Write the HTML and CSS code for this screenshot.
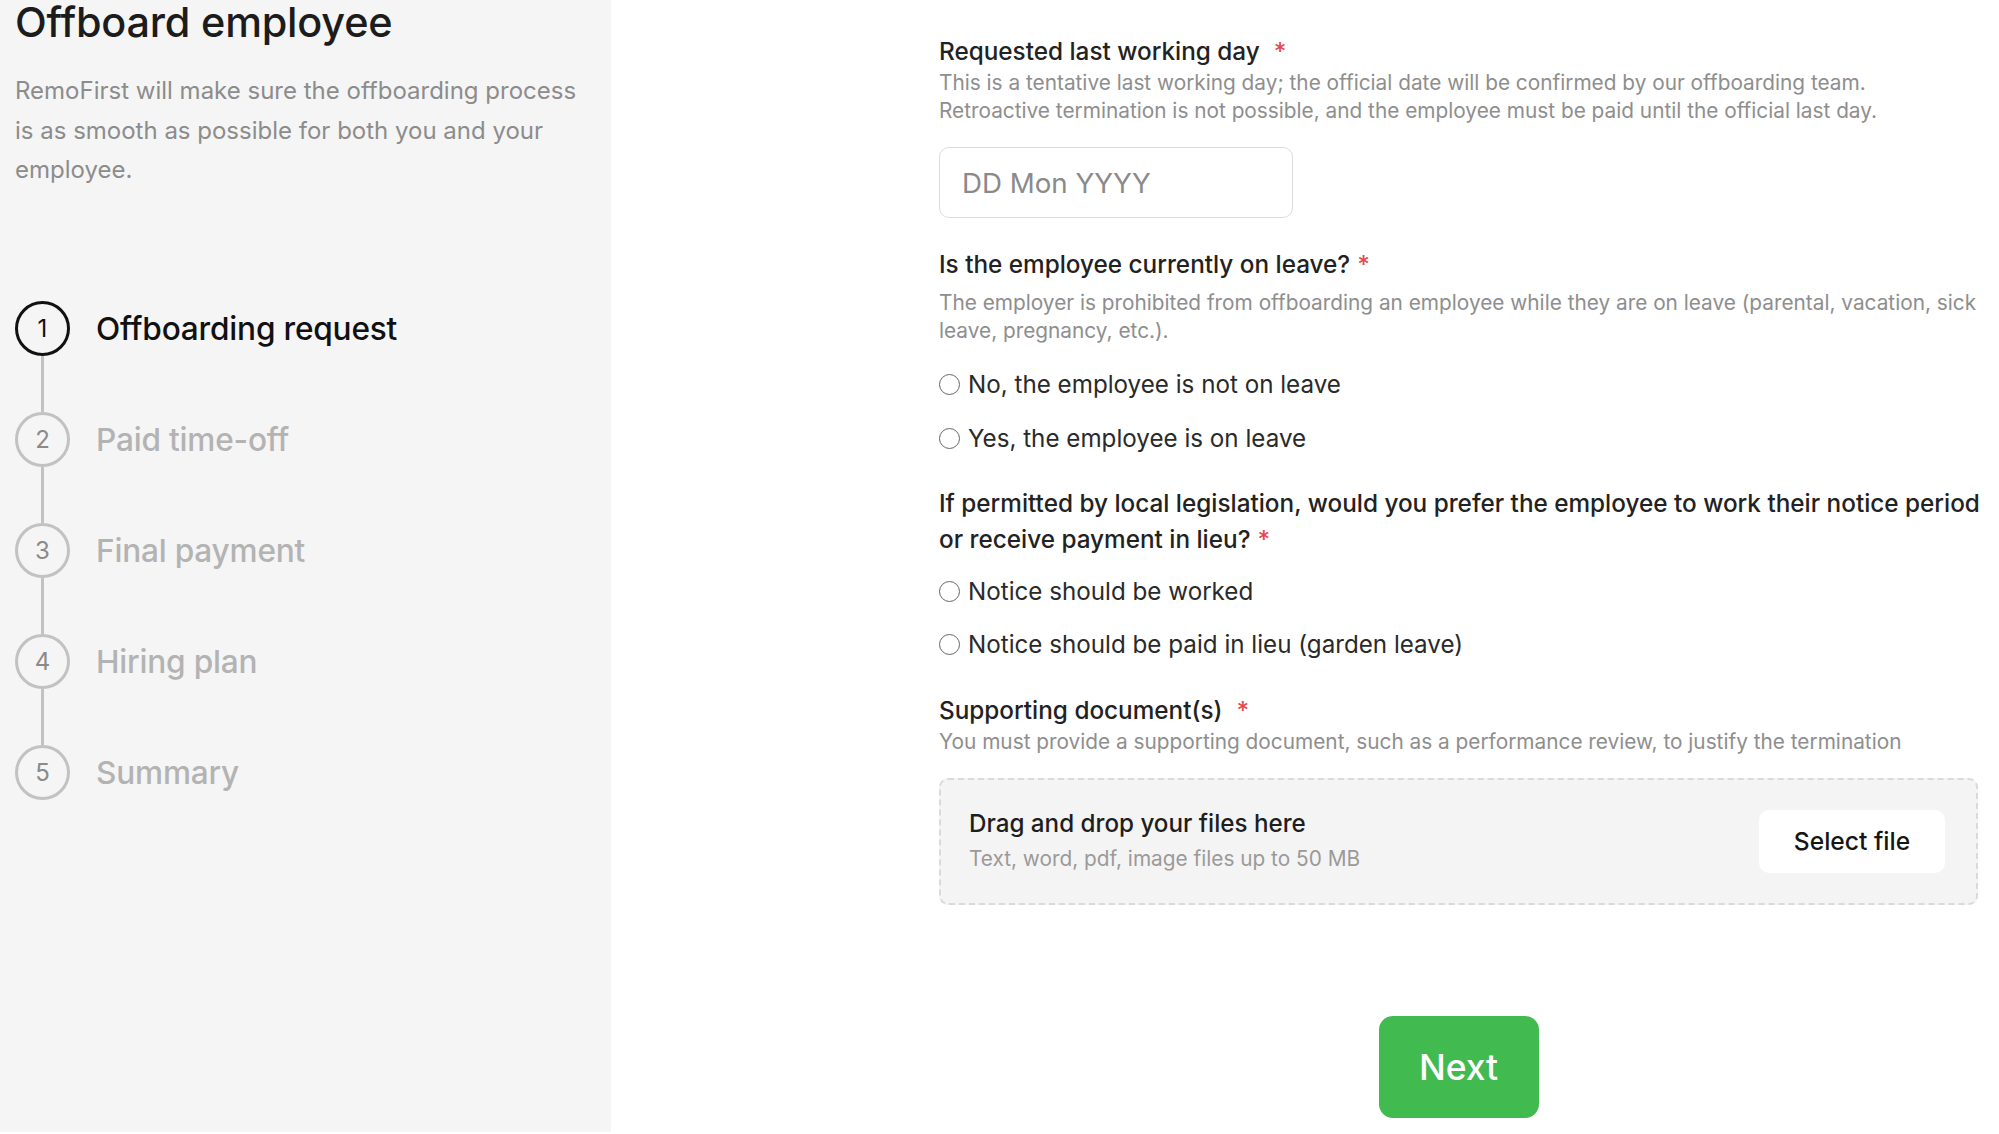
FILE: index.html
```html
<!DOCTYPE html>
<html lang="en">
<head>
<meta charset="utf-8">
<title>Offboard employee</title>
<link rel="stylesheet" href="styles.css">
</head>
<body>
<div class="page">
  <aside class="sidebar">
    <h1 class="title">Offboard employee</h1>
    <p class="intro">RemoFirst will make sure the offboarding process is as smooth as possible for both you and your employee.</p>
    <ol class="steps">
      <li class="step active"><span class="num">1</span><span class="step-label">Offboarding request</span></li>
      <li class="connector"></li>
      <li class="step"><span class="num">2</span><span class="step-label">Paid time-off</span></li>
      <li class="connector"></li>
      <li class="step"><span class="num">3</span><span class="step-label">Final payment</span></li>
      <li class="connector"></li>
      <li class="step"><span class="num">4</span><span class="step-label">Hiring plan</span></li>
      <li class="connector"></li>
      <li class="step"><span class="num">5</span><span class="step-label">Summary</span></li>
    </ol>
  </aside>
  <main class="main">
    <form class="form">
      <div class="label">Requested last working day<span class="req wide">*</span></div>
      <p class="hint">This is a tentative last working day; the official date will be confirmed by our offboarding team. Retroactive termination is not possible, and the employee must be paid until the official last day.</p>
      <input class="date" type="text" placeholder="DD Mon YYYY">

      <div class="label sec2">Is the employee currently on leave?<span class="req">*</span></div>
      <p class="hint hint2">The employer is prohibited from offboarding an employee while they are on leave (parental, vacation, sick leave, pregnancy, etc.).</p>
      <div class="radios r1">
        <label class="radio"><span class="dot"></span>No, the employee is not on leave</label>
        <label class="radio"><span class="dot"></span>Yes, the employee is on leave</label>
      </div>

      <div class="label tall sec3">If permitted by local legislation, would you prefer the employee to work their notice period<br>or receive payment in lieu?<span class="req">*</span></div>
      <div class="radios r2">
        <label class="radio"><span class="dot"></span>Notice should be worked</label>
        <label class="radio"><span class="dot"></span>Notice should be paid in lieu (garden leave)</label>
      </div>

      <div class="label sec4">Supporting document(s)<span class="req wide">*</span></div>
      <p class="hint">You must provide a supporting document, such as a performance review, to justify the termination</p>
      <div class="drop">
        <div class="drop-text">
          <div class="drop-title">Drag and drop your files here</div>
          <div class="drop-sub">Text, word, pdf, image files up to 50 MB</div>
        </div>
        <button type="button" class="select">Select file</button>
      </div>
      <div class="actions">
        <button type="button" class="next">Next</button>
      </div>
    </form>
  </main>
</div>
</body>
</html>
```
FILE: styles.css
```css
* { box-sizing: border-box; }
html, body { margin: 0; padding: 0; }
body {
  font-family: Inter, "Noto Sans", "Liberation Sans", sans-serif;
  background: #ffffff;
  color: #222;
  width: 1999px;
  height: 1134px;
  overflow: hidden;
}
.page {
  display: flex;
  height: 1134px;
}
.sidebar {
  width: 611px;
  flex: none;
  height: 1132px;
  background: #f5f5f5;
  padding-left: 15px;
  padding-right: 10px;
}
.title {
  margin: 0;
  font-size: 41.4px;
  line-height: 44px;
  font-weight: 500;
  color: #1c1c1c;
  letter-spacing: -0.2px;
}
.intro {
  margin: 27px 0 0;
  font-size: 24px;
  line-height: 39.5px;
  color: #8c8c8c;
}
.steps {
  list-style: none;
  margin: 111.8px 0 0;
  padding: 0;
  display: flex;
  flex-direction: column;
}
.step {
  display: flex;
  align-items: center;
  gap: 26px;
  height: 55px;
}
.num {
  width: 55px;
  height: 55px;
  flex: none;
  border-radius: 50%;
  border: 3px solid #c2c2c2;
  display: flex;
  align-items: center;
  justify-content: center;
  font-size: 24px;
  color: #8a8a8a;
}
.step-label {
  font-size: 31.6px;
  font-weight: 500;
  color: #b3b3b3;
  letter-spacing: -0.2px;
}
.step.active .num {
  border-color: #111;
  color: #111;
}
.step.active .step-label { color: #111; }
.connector {
  width: 3px;
  height: 56px;
  margin-left: 26px;
  background: #c2c2c2;
}
.main {
  flex: 1;
  padding-left: 328px;
  padding-top: 36px;
}
.form {
  width: 1039px;
}
.label {
  font-size: 24.3px;
  line-height: 30px;
  font-weight: 500;
  color: #222;
}
.label.tall {
  line-height: 36px;
  margin-right: -20px;
  white-space: nowrap;
}
.req {
  color: #e5484d;
  margin-left: 7px;
  font-weight: 500;
}
.req.wide { margin-left: 14px; }
.hint {
  margin: 3px 0 0;
  font-size: 20.8px;
  line-height: 28px;
  color: #8e8e8e;
}
.hint2 { margin-top: 10px; }
.date {
  display: block;
  margin-top: 22px;
  width: 354px;
  height: 71px;
  border: 1.5px solid #dcdcdc;
  border-radius: 10px;
  padding: 0 22px;
  font-family: inherit;
  font-size: 27.7px;
  color: #333;
  background: #fff;
  outline: none;
}
.date::placeholder { color: #8a8a8a; }
.sec2 { margin-top: 30.7px; }
.sec3 { margin-top: 32px; }
.sec4 { margin-top: 36px; }
.radios {
  display: flex;
  flex-direction: column;
  gap: 24px;
}
.radios.r1 { margin-top: 24.7px; }
.radios.r2 { margin-top: 18.7px; gap: 23px; }
.radio {
  display: flex;
  align-items: center;
  gap: 8px;
  height: 30px;
  font-size: 24.2px;
  color: #2a2a2a;
}
.dot {
  width: 21px;
  height: 21px;
  flex: none;
  border-radius: 50%;
  border: 1.5px solid #666;
  background: #fff;
}
.drop {
  margin-top: 21.7px;
  height: 127px;
  background: #f4f4f4;
  border: 2px dashed #dadada;
  border-radius: 9px;
  display: flex;
  align-items: center;
  justify-content: space-between;
  padding: 0 31px 0 28px;
}
.drop-text {
  display: flex;
  flex-direction: column;
  gap: 6px;
}
.drop-title {
  font-size: 24.2px;
  line-height: 30px;
  font-weight: 500;
  color: #1e1e1e;
}
.drop-sub {
  font-size: 20.8px;
  line-height: 28px;
  color: #9a9a9a;
}
.select {
  width: 186px;
  height: 63px;
  border: none;
  border-radius: 10px;
  background: #fff;
  font-family: inherit;
  font-size: 24.6px;
  font-weight: 500;
  color: #161616;
}
.actions {
  margin-top: 111.7px;
  display: flex;
  justify-content: center;
}
.next {
  width: 160px;
  height: 102px;
  border: none;
  border-radius: 14px;
  background: #41ba4f;
  color: #fff;
  font-family: inherit;
  font-size: 35.4px;
  font-weight: 500;
}
```
